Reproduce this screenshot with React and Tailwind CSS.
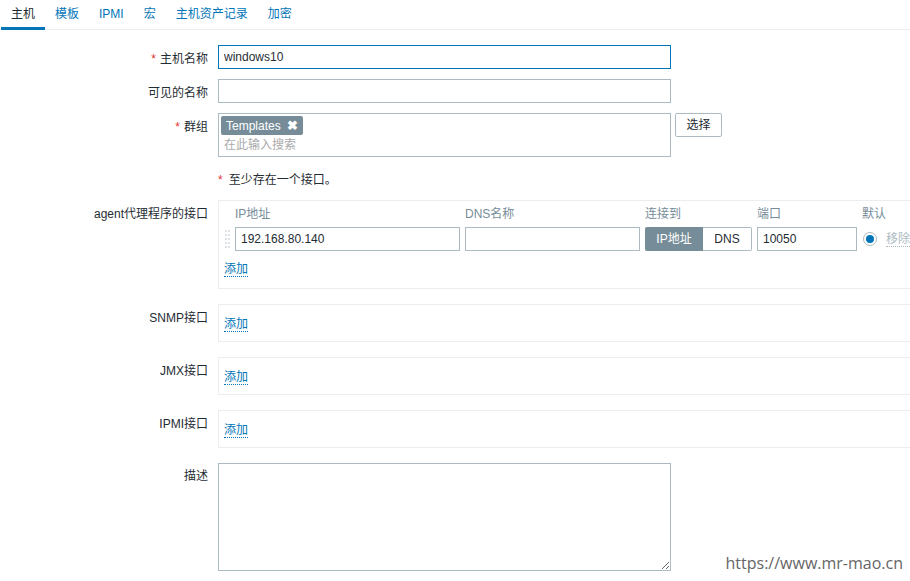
import { useState } from "react";

const TABS = ["主机", "模板", "IPMI", "宏", "主机资产记录", "加密"];
const FONT = { fontFamily: '"Liberation Sans", Arial, "Noto Sans CJK SC", sans-serif' };

function Label({ required, children, className = "" }) {
  return (
    <div className={`w-[218px] shrink-0 pr-[10px] text-right text-[12px] text-[#1f2c33] ${className}`}>
      {required && <span className="text-[#e33734] mr-[4px]">*</span>}
      {children}
    </div>
  );
}

function AddLink() {
  return <span className="text-[12px] text-[#0275b8] border-b border-dotted border-[#0275b8] leading-[14px] cursor-pointer">添加</span>;
}

function IfaceBox({ label }) {
  return (
    <div className="flex mb-[15px]">
      <Label className="pt-[5px]">{label}</Label>
      <div className="w-[720px] shrink-0 h-[38px] border border-[#ebeef0] pl-[5px]">
        <div className="pt-[10px]"><AddLink /></div>
      </div>
    </div>
  );
}

export default function App() {
  const [tab, setTab] = useState(0);
  return (
    <div className="relative w-[910px] h-[581px] overflow-hidden bg-white text-[12px] text-[#1f2c33]" style={FONT}>
      {/* tabs */}
      <div className="flex border-b border-[#ebeef0] h-[30px] pl-[1px]">
        {TABS.map((t, i) => (
          <button
            key={t}
            onClick={() => setTab(i)}
            className={`px-[10px] h-[30px] text-[12px] border-b-[3px] ${tab === i ? "border-[#0275b8] text-[#1f2c33]" : "border-transparent text-[#0275b8]"}`}
          >
            {t}
          </button>
        ))}
      </div>

      <div className="pt-[15px]">
        <div className="flex mb-[10px]">
          <Label required className="pt-[5px]">主机名称</Label>
          <input readOnly value="windows10" className="w-[453px] shrink-0 h-[24px] border border-[#0275b8] px-[5px] text-[12px] outline-none text-[#1f2c33]" />
        </div>
        <div className="flex mb-[10px]">
          <Label className="pt-[5px]">可见的名称</Label>
          <input readOnly className="w-[453px] shrink-0 h-[24px] border border-[#acbbc2] px-[5px] outline-none" />
        </div>
        <div className="flex mb-[14px]">
          <Label required className="pt-[5px]">群组</Label>
          <div className="w-[453px] shrink-0 h-[44px] border border-[#acbbc2] px-[2px] pt-[2px]">
            <span className="inline-flex items-center h-[19px] px-[5px] rounded-[2px] bg-[#768d99] text-white text-[12px]">
              Templates
              <span className="ml-[6px] text-[13px] font-bold leading-none">✖</span>
            </span>
            <div className="text-[#aaaaaa] pl-[3px] pt-[1px]">在此输入搜索</div>
          </div>
          <button className="ml-[4px] w-[47px] h-[24px] border border-[#acbbc2] rounded-[2px] text-[12px] text-[#1f2c33] bg-white">选择</button>
        </div>
        <div className="flex mb-[13px]">
          <div className="w-[218px]" />
          <div className="h-[16px]"><span className="text-[#e33734] mr-[6px]">*</span>至少存在一个接口。</div>
        </div>

        {/* agent */}
        <div className="flex mb-[15px]">
          <Label className="pt-[5px]">agent代理程序的接口</Label>
          <div className="w-[720px] shrink-0 h-[89px] border border-[#ebeef0] pl-[5px]">
            <div className="flex h-[26px] items-center text-[#768d99]">
              <div className="w-[11px]" />
              <div className="w-[230px]">IP地址</div>
              <div className="w-[180px]">DNS名称</div>
              <div className="w-[112px]">连接到</div>
              <div className="w-[105px]">端口</div>
              <div>默认</div>
            </div>
            <div className="flex items-center">
              <div className="w-[11px] h-[20px] grid grid-cols-2 gap-y-[2px] content-center pl-[1px] pr-[4px]">
                {[...Array(10)].map((_, i) => <span key={i} className="w-[2px] h-[2px] bg-[#dfe4e7]" />)}
              </div>
              <input readOnly value="192.168.80.140" className="w-[225px] shrink-0 h-[24px] border border-[#acbbc2] px-[5px] outline-none text-[12px]" />
              <input readOnly className="ml-[5px] w-[175px] shrink-0 h-[24px] border border-[#acbbc2] outline-none" />
              <div className="ml-[5px] flex h-[24px] shrink-0">
                <span className="w-[58px] flex items-center justify-center bg-[#768d99] text-white rounded-l-[2px]">IP地址</span>
                <span className="w-[49px] flex items-center justify-center border border-l-0 border-[#acbbc2] rounded-r-[2px] text-[#1f2c33]">DNS</span>
              </div>
              <input readOnly value="10050" className="ml-[5px] w-[100px] shrink-0 h-[24px] border border-[#acbbc2] px-[5px] outline-none text-[12px]" />
              <span className="ml-[6px] w-[14px] h-[14px] shrink-0 rounded-full border border-[#acbbc2] flex items-center justify-center">
                <span className="w-[8px] h-[8px] rounded-full bg-[#0275b8]" />
              </span>
              <span className="ml-[9px] shrink-0 whitespace-nowrap text-[#acbbc2] border-b border-dotted border-[#acbbc2] leading-[14px]">移除</span>
            </div>
            <div className="pt-[9px]"><AddLink /></div>
          </div>
        </div>

        <IfaceBox label="SNMP接口" />
        <IfaceBox label="JMX接口" />
        <IfaceBox label="IPMI接口" />

        <div className="flex">
          <Label className="pt-[4px]">描述</Label>
          <textarea readOnly className="w-[453px] shrink-0 h-[108px] border border-[#acbbc2] outline-none resize" />
        </div>
      </div>

      <div className="absolute right-[7px] bottom-[6px] text-[16px] text-[#666666]" style={{ fontFamily: '"Open Sans", "Noto Sans", sans-serif' }}>
        https://www.mr-mao.cn
      </div>
    </div>
  );
}
